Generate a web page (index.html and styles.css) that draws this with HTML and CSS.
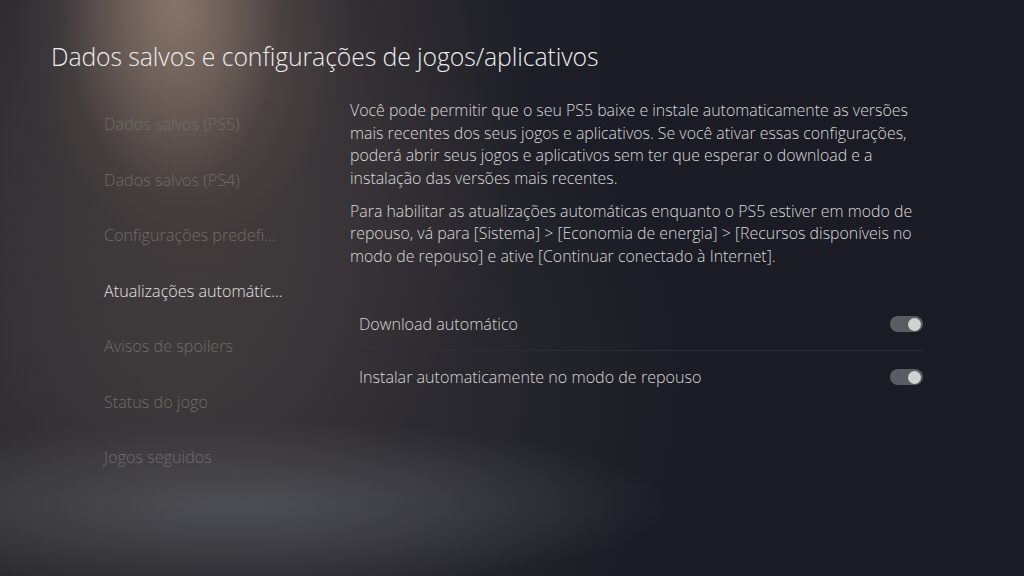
FILE: index.html
```html
<!DOCTYPE html>
<html lang="pt-BR">
<head>
    <meta charset="UTF-8">
    <meta name="viewport" content="width=device-width, initial-scale=1.0">
    <title>Dados salvos e configurações de jogos/aplicativos</title>
    <link rel="stylesheet" href="styles.css">
</head>
<body>
    <div class="screen">
        <h1 class="title">Dados salvos e configurações de jogos/aplicativos</h1>

        <div class="layout">
            <ul class="menu">
                <li>Dados salvos (PS5)</li>
                <li>Dados salvos (PS4)</li>
                <li>Configurações predefi...</li>
                <li class="active">Atualizações automátic...</li>
                <li>Avisos de spoilers</li>
                <li>Status do jogo</li>
                <li>Jogos seguidos</li>
            </ul>

            <div class="panel">
                <p class="desc">Você pode permitir que o seu PS5 baixe e instale automaticamente as versões mais recentes dos seus jogos e aplicativos. Se você ativar essas configurações, poderá abrir seus jogos e aplicativos sem ter que esperar o download e a instalação das versões mais recentes.</p>
                <p class="desc">Para habilitar as atualizações automáticas enquanto o PS5 estiver em modo de repouso, vá para [Sistema] &gt; [Economia de energia] &gt; [Recursos disponíveis no modo de repouso] e ative [Continuar conectado à Internet].</p>

                <div class="options">
                    <div class="option">
                        <span>Download automático</span>
                        <span class="toggle"><span class="knob"></span></span>
                    </div>
                    <div class="option">
                        <span>Instalar automaticamente no modo de repouso</span>
                        <span class="toggle"><span class="knob"></span></span>
                    </div>
                </div>
            </div>
        </div>
    </div>
</body>
</html>
```

FILE: styles.css
```css
html, body {
    margin: 0;
    padding: 0;
}
body {
    width: 1024px;
    height: 576px;
    overflow: hidden;
    font-family: "Open Sans", "Noto Sans", sans-serif;
    font-weight: 300;
    color: #dcdcdc;
    background-color: #1b1c25;
    background-image:
        radial-gradient(ellipse 110px 190px at 172px 0px, rgba(170, 146, 130, 0.55), rgba(170, 146, 130, 0) 100%),
        radial-gradient(ellipse 170px 230px at 185px 10px, rgba(140, 120, 108, 0.4), rgba(140, 120, 108, 0) 100%),
        radial-gradient(ellipse 330px 440px at 200px 90px, rgba(88, 76, 72, 0.6), rgba(88, 76, 72, 0) 100%),
        radial-gradient(ellipse 430px 85px at 240px 505px, rgba(84, 86, 92, 0.8), rgba(84, 86, 92, 0) 100%),
        radial-gradient(ellipse 520px 380px at 170px 380px, rgba(60, 56, 58, 0.8), rgba(60, 56, 58, 0) 100%),
        linear-gradient(90deg, #24242b 0%, #24242c 30%, #1b1c25 60%, #1a1b24 100%);
}
.screen {
    padding: 37px 0 0 51px;
}
.title {
    margin: 0;
    font-size: 24.8px;
    font-weight: 300;
    color: #ececec;
    letter-spacing: -0.1px;
    line-height: 38px;
}
.layout {
    display: grid;
    grid-template-columns: 299px 573px;
    margin-top: 10px;
}
.menu {
    list-style: none;
    margin: 0;
    padding: 28px 0 0 53px;
}
.menu li {
    font-size: 16.2px;
    line-height: 22px;
    height: 55.5px;
    color: #716c6a;
    white-space: nowrap;
}
.menu li.active {
    color: #e2e2e2;
}
.panel {
    padding-top: 14px;
}
.desc {
    margin: 0 0 10.5px;
    max-width: 568px;
    font-size: 15.9px;
    line-height: 22.5px;
    color: #dadada;
}
.options {
    margin-top: 31px;
    margin-left: 9px;
}
.option {
    display: flex;
    justify-content: space-between;
    align-items: center;
    height: 52px;
    font-size: 16.1px;
    color: #d8d8d8;
}
.option + .option {
    border-top: 1px solid #2c2d36;
}
.toggle {
    display: flex;
    justify-content: flex-end;
    align-items: center;
    width: 33px;
    height: 16px;
    border-radius: 8px;
    background: #5b5b62;
    padding: 0 2px;
    box-sizing: border-box;
}
.knob {
    width: 13px;
    height: 13px;
    border-radius: 50%;
    background: #d2d2d2;
}
```
